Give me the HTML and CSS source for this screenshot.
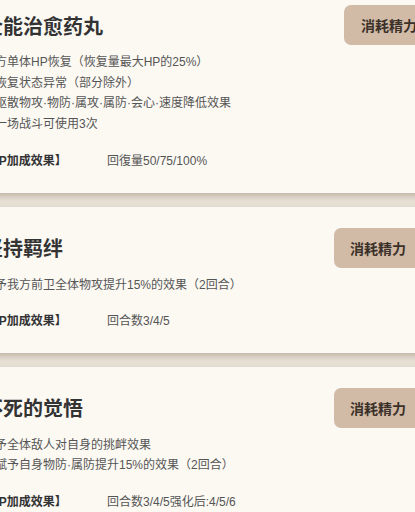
FILE: index.html
```html
<!DOCTYPE html>
<html lang="zh-CN">
<head>
    <meta charset="UTF-8">
    <meta name="viewport" content="width=device-width, initial-scale=1.0">
    <title>技能一览</title>
    <link rel="stylesheet" href="styles.css">
</head>
<body>
    <div class="skill-list">
        <div class="skill-card first">
            <div class="skill-head">
                <h2 class="skill-name">全能治愈药丸</h2>
                <button class="cost-button shifted">消耗精力</button>
            </div>
            <div class="skill-desc">
                <p>我方单体HP恢复（恢复量最大HP的25%）</p>
                <p>并恢复状态异常（部分除外）</p>
                <p>并驱散物攻·物防·属攻·属防·会心·速度降低效果</p>
                <p>每一场战斗可使用3次</p>
            </div>
            <div class="skill-bonus">
                <span class="bonus-label">【HP加成效果】</span>
                <span class="bonus-value">回復量50/75/100%</span>
            </div>
        </div>

        <div class="skill-card">
            <div class="skill-head">
                <h2 class="skill-name">坚持羁绊</h2>
                <button class="cost-button">消耗精力</button>
            </div>
            <div class="skill-desc">
                <p>赋予我方前卫全体物攻提升15%的效果（2回合）</p>
            </div>
            <div class="skill-bonus">
                <span class="bonus-label">【HP加成效果】</span>
                <span class="bonus-value">回合数3/4/5</span>
            </div>
        </div>

        <div class="skill-card">
            <div class="skill-head">
                <h2 class="skill-name">不死的觉悟</h2>
                <button class="cost-button">消耗精力</button>
            </div>
            <div class="skill-desc">
                <p>赋予全体敌人对自身的挑衅效果</p>
                <p>并赋予自身物防·属防提升15%的效果（2回合）</p>
            </div>
            <div class="skill-bonus">
                <span class="bonus-label">【HP加成效果】</span>
                <span class="bonus-value">回合数3/4/5强化后:4/5/6</span>
            </div>
        </div>
    </div>
</body>
</html>
```

FILE: styles.css
```css
html, body {
    overflow: hidden;
}
body {
    margin: 0;
    background-color: #e8e2d8;
    font-family: "Liberation Sans", "Noto Sans CJK SC", sans-serif;
    color: #333;
}
.skill-list {
    width: 460px;
    margin: -16px 0 0 -33px;
}
.skill-card {
    display: flex;
    flex-direction: column;
    padding: 21px 5px 21px 16px;
    margin-bottom: 14px;
    background-color: #fcf9f3;
    box-shadow: 0 3px 7px rgba(110, 90, 60, 0.35);
}
.skill-head {
    display: flex;
    align-items: center;
    justify-content: space-between;
}
.skill-name {
    margin: 0;
    font-size: 20px;
    font-weight: bold;
    color: #333;
}
.cost-button {
    height: 40px;
    padding: 0 16px;
    font-family: inherit;
    font-size: 14px;
    font-weight: bold;
    color: #3b3129;
    background-color: #d1bba7;
    border: none;
    border-radius: 7px;
    cursor: pointer;
}
.cost-button.shifted {
    margin-right: -11px;
    padding-left: 17px;
}
.skill-desc {
    margin-top: 7px;
}
.skill-desc p {
    margin: 0;
    font-size: 12px;
    line-height: 20.5px;
    color: #555;
}
.skill-bonus {
    display: grid;
    grid-template-columns: 124px auto;
    margin-top: 16px;
    font-size: 12px;
    line-height: 20.5px;
}
.first .skill-bonus {
    margin-top: 17px;
}
.bonus-label {
    margin-left: -5px;
    font-weight: bold;
    color: #333;
}
.bonus-value {
    color: #555;
}
```
